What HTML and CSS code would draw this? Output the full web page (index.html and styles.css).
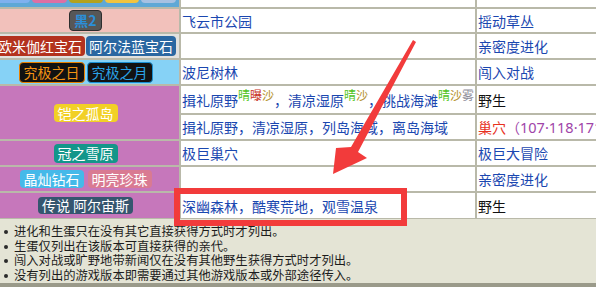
FILE: index.html
```html
<!DOCTYPE html>
<html lang="zh-CN">
<head>
<meta charset="utf-8">
<title>地点</title>
<link rel="stylesheet" href="styles.css">
</head>
<body>
<div class="viewport">
  <table class="loc">
    <colgroup><col class="c1"><col class="c2"><col class="c3"></colgroup>
    <tr class="r-top">
      <td class="ver v-top"><div class="strip"><span class="tb tb1"></span><span class="tb tb2"></span><span class="tb tb3"></span><span class="tb tb4"></span><span class="tb tb5"></span></div></td>
      <td></td><td></td>
    </tr>
    <tr class="r1">
      <td class="ver v-pink"><div class="bds"><span class="bd bd-b2">黑2</span></div></td>
      <td class="loc-c"><a class="lk">飞云市公园</a></td>
      <td class="how"><a class="lk">摇动草丛</a></td>
    </tr>
    <tr class="r2">
      <td class="ver v-gray"><div class="bds g1"><span class="bd bd-or">欧米伽红宝石</span><span class="bd bd-as">阿尔法蓝宝石</span></div></td>
      <td class="loc-c"></td>
      <td class="how"><a class="lk">亲密度进化</a></td>
    </tr>
    <tr class="r3">
      <td class="ver v-sky"><div class="bds"><span class="bd bd-us">究极之日</span><span class="bd bd-um">究极之月</span></div></td>
      <td class="loc-c"><a class="lk">波尼树林</a></td>
      <td class="how"><a class="lk">闯入对战</a></td>
    </tr>
    <tr class="r4a">
      <td class="ver v-pur" rowspan="2"><div class="bds"><span class="bd bd-ia">铠之孤岛</span></div></td>
      <td class="loc-c"><a class="lk">揖礼原野</a><sup class="wx"><span class="w-sun">晴</span><span class="w-hot">曝</span><span class="w-sand">沙</span></sup><span class="lk">，</span><a class="lk">清凉湿原</a><sup class="wx"><span class="w-sun">晴</span><span class="w-sand">沙</span></sup><span class="lk">，</span><a class="lk">挑战海滩</a><sup class="wx"><span class="w-sun">晴</span><span class="w-sand">沙</span><span class="w-fog">雾</span></sup></td>
      <td class="how plain">野生</td>
    </tr>
    <tr class="r4b">
      <td class="loc-c"><a class="lk">揖礼原野，清凉湿原，列岛海域，离岛海域</a></td>
      <td class="how"><span class="den">巢穴</span><span class="den-n">（<span class="num">107·118·171·172</span>）</span></td>
    </tr>
    <tr class="r5">
      <td class="ver v-pur"><div class="bds"><span class="bd bd-ct">冠之雪原</span></div></td>
      <td class="loc-c"><a class="lk">极巨巢穴</a></td>
      <td class="how"><a class="lk">极巨大冒险</a></td>
    </tr>
    <tr class="r6">
      <td class="ver v-pur"><div class="bds g4"><span class="bd bd-bd">晶灿钻石</span><span class="bd bd-sp">明亮珍珠</span></div></td>
      <td class="loc-c"></td>
      <td class="how"><a class="lk">亲密度进化</a></td>
    </tr>
    <tr class="r7">
      <td class="ver v-pur"><div class="bds"><span class="bd bd-la">传说 阿尔宙斯</span></div></td>
      <td class="loc-c"><a class="lk">深幽森林，酷寒荒地，观雪温泉</a></td>
      <td class="how plain">野生</td>
    </tr>
  </table>
  <div class="notes">
    <ul>
      <li>进化和生蛋只在没有其它直接获得方式时才列出。</li>
      <li>生蛋仅列出在该版本可直接获得的亲代。</li>
      <li>闯入对战或旷野地带新闻仅在没有其他野生获得方式时才列出。</li>
      <li>没有列出的游戏版本即需要通过其他游戏版本或外部途径传入。</li>
    </ul>
  </div>
  <svg class="annot" width="596" height="297" viewBox="0 0 596 297">
    <polygon fill="#f23b3b" points="333,174 336,148 351,147 413,40 416,42 358,152 367,158"/>
    <rect x="177" y="191" width="227" height="32" fill="none" stroke="#f23b3b" stroke-width="6"/>
  </svg>
</div>
</body>
</html>
```

FILE: styles.css
```css
html, body {
  margin: 0;
  padding: 0;
  background: #ffffff;
}
body {
  width: 596px;
  height: 297px;
  overflow: hidden;
  font-family: "Noto Sans CJK SC", "Noto Sans", sans-serif;
  font-size: 14px;
  color: #111;
}
.viewport {
  position: relative;
  width: 596px;
  height: 297px;
  overflow: hidden;
}
.loc {
  border-collapse: separate;
  border-spacing: 2px;
  background: #b9b9a9;
  margin: -19px 0 0 -10px;
  table-layout: fixed;
  width: 793px;
}
.c1 { width: 187px; }
.c2 { width: 294px; }
.c3 { width: 304px; }
.loc td {
  padding: 0;
  background: #ffffff;
  vertical-align: middle;
  line-height: 18px;
  white-space: nowrap;
  overflow: hidden;
}
.r-top { height: 24px; }
.r1 { height: 23px; }
.r2 { height: 24px; }
.r3 { height: 24px; }
.r4a { height: 27px; }
.r4b { height: 24px; }
.r5 { height: 24px; }
.r6 { height: 24px; }
.r7 { height: 25px; }

.loc td.loc-c { padding-left: 1px; }
.loc td.how { padding-left: 1px; }
.plain { color: #111; }
.lk { color: #1a47b0; text-decoration: none; }

.loc td.v-top { background: #5ea8d6; vertical-align: top; }
.loc td.v-pink { background: #f2c1bb; }
.loc td.v-gray { background: #e1e1de; }
.loc td.v-sky { background: #86d2f6; }
.loc td.v-pur { background: #c677bb; }

.strip {
  display: flex;
  gap: 2px;
  padding-left: 5px;
}
.tb {
  display: block;
  height: 20px;
  border-radius: 4px;
}
.tb1 { width: 33px; background: #7fb1ee; }
.tb2 { width: 35px; background: #de6fa3; }
.tb3 { width: 34px; background: #b4a21c; }
.tb4 { width: 34px; background: #f3c43e; }
.tb5 { width: 35px; background: #a6c1e2; }

.bds {
  display: flex;
  justify-content: center;
  gap: 2px;
}
.bds.g1 { gap: 1px; }
.bds.g4 { gap: 4px; }
.bd {
  display: block;
  padding: 0 4px;
  border-radius: 4px;
  color: #ffffff;
  line-height: 18px;
  font-size: 14px;
}
.bd-b2 {
  background: #575757;
  border: 1px solid #2e2e2e;
  color: #2b8fd8;
  font-weight: bold;
  line-height: 19px;
}
.bd-or { background: #b3321e; line-height: 20px; padding: 0 3px; }
.bd-as { background: #2a67a1; line-height: 20px; padding: 0 3px; }
.bd-us {
  background: #121212;
  border: 1px solid #e88000;
  color: #f39312;
  line-height: 19px;
}
.bd-um {
  background: #121212;
  border: 1px solid #1a8fd2;
  color: #2aa2e6;
  line-height: 19px;
}
.bd-ia { background: #f2d026; }
.bd-ct { background: #13968a; line-height: 19px; }
.bd-bd { background: #45b9e9; }
.bd-sp { background: #d97a92; }
.bd-la { background: #35566f; line-height: 17px; }

.wx {
  font-size: 12px;
  line-height: 0;
  vertical-align: 6px;
}
.w-sun { color: #4fc31d; }
.w-hot { color: #c8341c; }
.w-sand { color: #b4902c; }
.w-fog { color: #8c8c98; }

.den { color: #e8301e; }
.den-n { color: #a044a8; }
.num { font-family: "Noto Sans", "Liberation Sans", sans-serif; font-size: 14.5px; }

.notes {
  background: #e4e4d5;
  border-bottom: 4px solid #9a9a8a;
  margin-top: -1px;
  height: 64px;
  box-sizing: content-box;
}
.notes ul {
  list-style: none;
  margin: 0;
  padding: 5px 0 0 14px;
}
.notes li {
  position: relative;
  font-size: 12.3px;
  line-height: 14.5px;
  color: #1c1c1c;
  white-space: nowrap;
}
.notes li::before {
  content: "";
  position: absolute;
  left: -10px;
  top: 6px;
  width: 4px;
  height: 4px;
  border-radius: 50%;
  background: #2a2a2a;
}

.annot {
  position: absolute;
  left: 0;
  top: 0;
  pointer-events: none;
}
```
